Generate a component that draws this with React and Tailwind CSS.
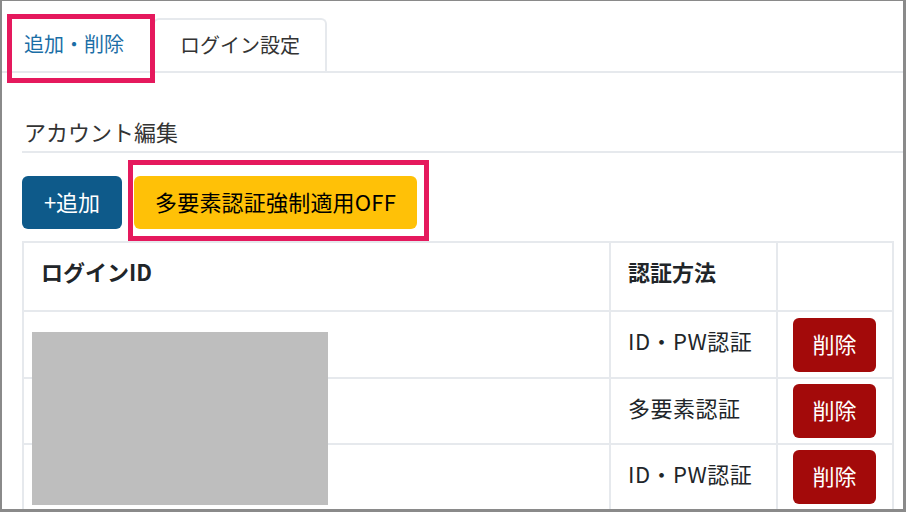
export default function App() {
  const rows = [
    { method: "ID・PW認証", h: "h-[67px]" },
    { method: "多要素認証", h: "h-[66px]" },
    { method: "ID・PW認証", h: "h-[66px]" },
  ];

  return (
    <div className="relative w-[906px] h-[512px] overflow-hidden bg-white border-t border-l-2 border-r-[3px] border-b-[3px] border-[#8a8a8a] font-['Noto_Sans_CJK_JP',sans-serif] text-[#212529]">
      {/* Tabs */}
      <nav className="flex items-end h-[72px] border-b-2 border-[#e6e9ed]">
        <div className="w-[151px] h-[53px] flex items-center pl-[22px] pb-[2px] text-[20px] text-[#1b6ea6]">
          追加・削除
        </div>
        <div className="h-[53px] px-[25px] pb-[2px] flex items-center border-2 border-b-0 border-[#e6e9ed] rounded-t-[6px] text-[20px] text-[#333]">
          ログイン設定
        </div>
      </nav>

      {/* Content */}
      <div className="pt-[42px]">
        <div className="ml-[20px] pl-[2px] pb-[3px] border-b-2 border-[#e6e9ed] text-[22px] leading-[33px] text-[#333]">
          アカウント編集
        </div>

        <div className="flex gap-[12px] ml-[20px] mt-[23px]">
          <button className="w-[100px] h-[53px] pb-[3px] rounded-[6px] bg-[#0e5a8a] text-white text-[22px]">
            +追加
          </button>
          <button className="w-[283px] h-[53px] pb-[3px] rounded-[6px] bg-[#ffc107] text-black text-[22px] tracking-[0.2px]">
            多要素認証強制適用OFF
          </button>
        </div>

        <table className="ml-[20px] mt-[12px] w-[870px] table-fixed border-collapse">
          <colgroup>
            <col className="w-[587px]" />
            <col className="w-[167px]" />
            <col className="w-[116px]" />
          </colgroup>
          <thead>
            <tr className="h-[69px]">
              <th className="border-2 border-[#e6e9ed] pl-[17px] pb-[10px] text-left text-[22px] font-bold">ログインID</th>
              <th className="border-2 border-[#e6e9ed] pl-[17px] pb-[10px] text-left text-[22px] font-bold">認証方法</th>
              <th className="border-2 border-[#e6e9ed]"></th>
            </tr>
          </thead>
          <tbody>
            {rows.map((r, i) => (
              <tr key={i} className={r.h}>
                <td className="border-2 border-[#e6e9ed]"></td>
                <td className="border-2 border-[#e6e9ed] pl-[17px] pb-[8px] text-[22px] whitespace-nowrap tracking-[0.5px]">{r.method}</td>
                <td className="border-2 border-[#e6e9ed] pl-[15px]">
                  <button className="w-[83px] h-[54px] pb-[3px] rounded-[6px] bg-[#a30a0a] text-white text-[22px]">
                    削除
                  </button>
                </td>
              </tr>
            ))}
          </tbody>
        </table>
      </div>

      {/* Masked login IDs */}
      <div className="absolute left-[30px] top-[331px] w-[296px] h-[173px] bg-[#bebebe]" />

      {/* Annotation highlights */}
      <div className="absolute left-[5px] top-[13px] w-[148px] h-[69px] border-[5px] border-[#e5195d]" />
      <div className="absolute left-[126px] top-[159px] w-[301px] h-[81px] border-[5px] border-[#e5195d]" />
    </div>
  );
}
